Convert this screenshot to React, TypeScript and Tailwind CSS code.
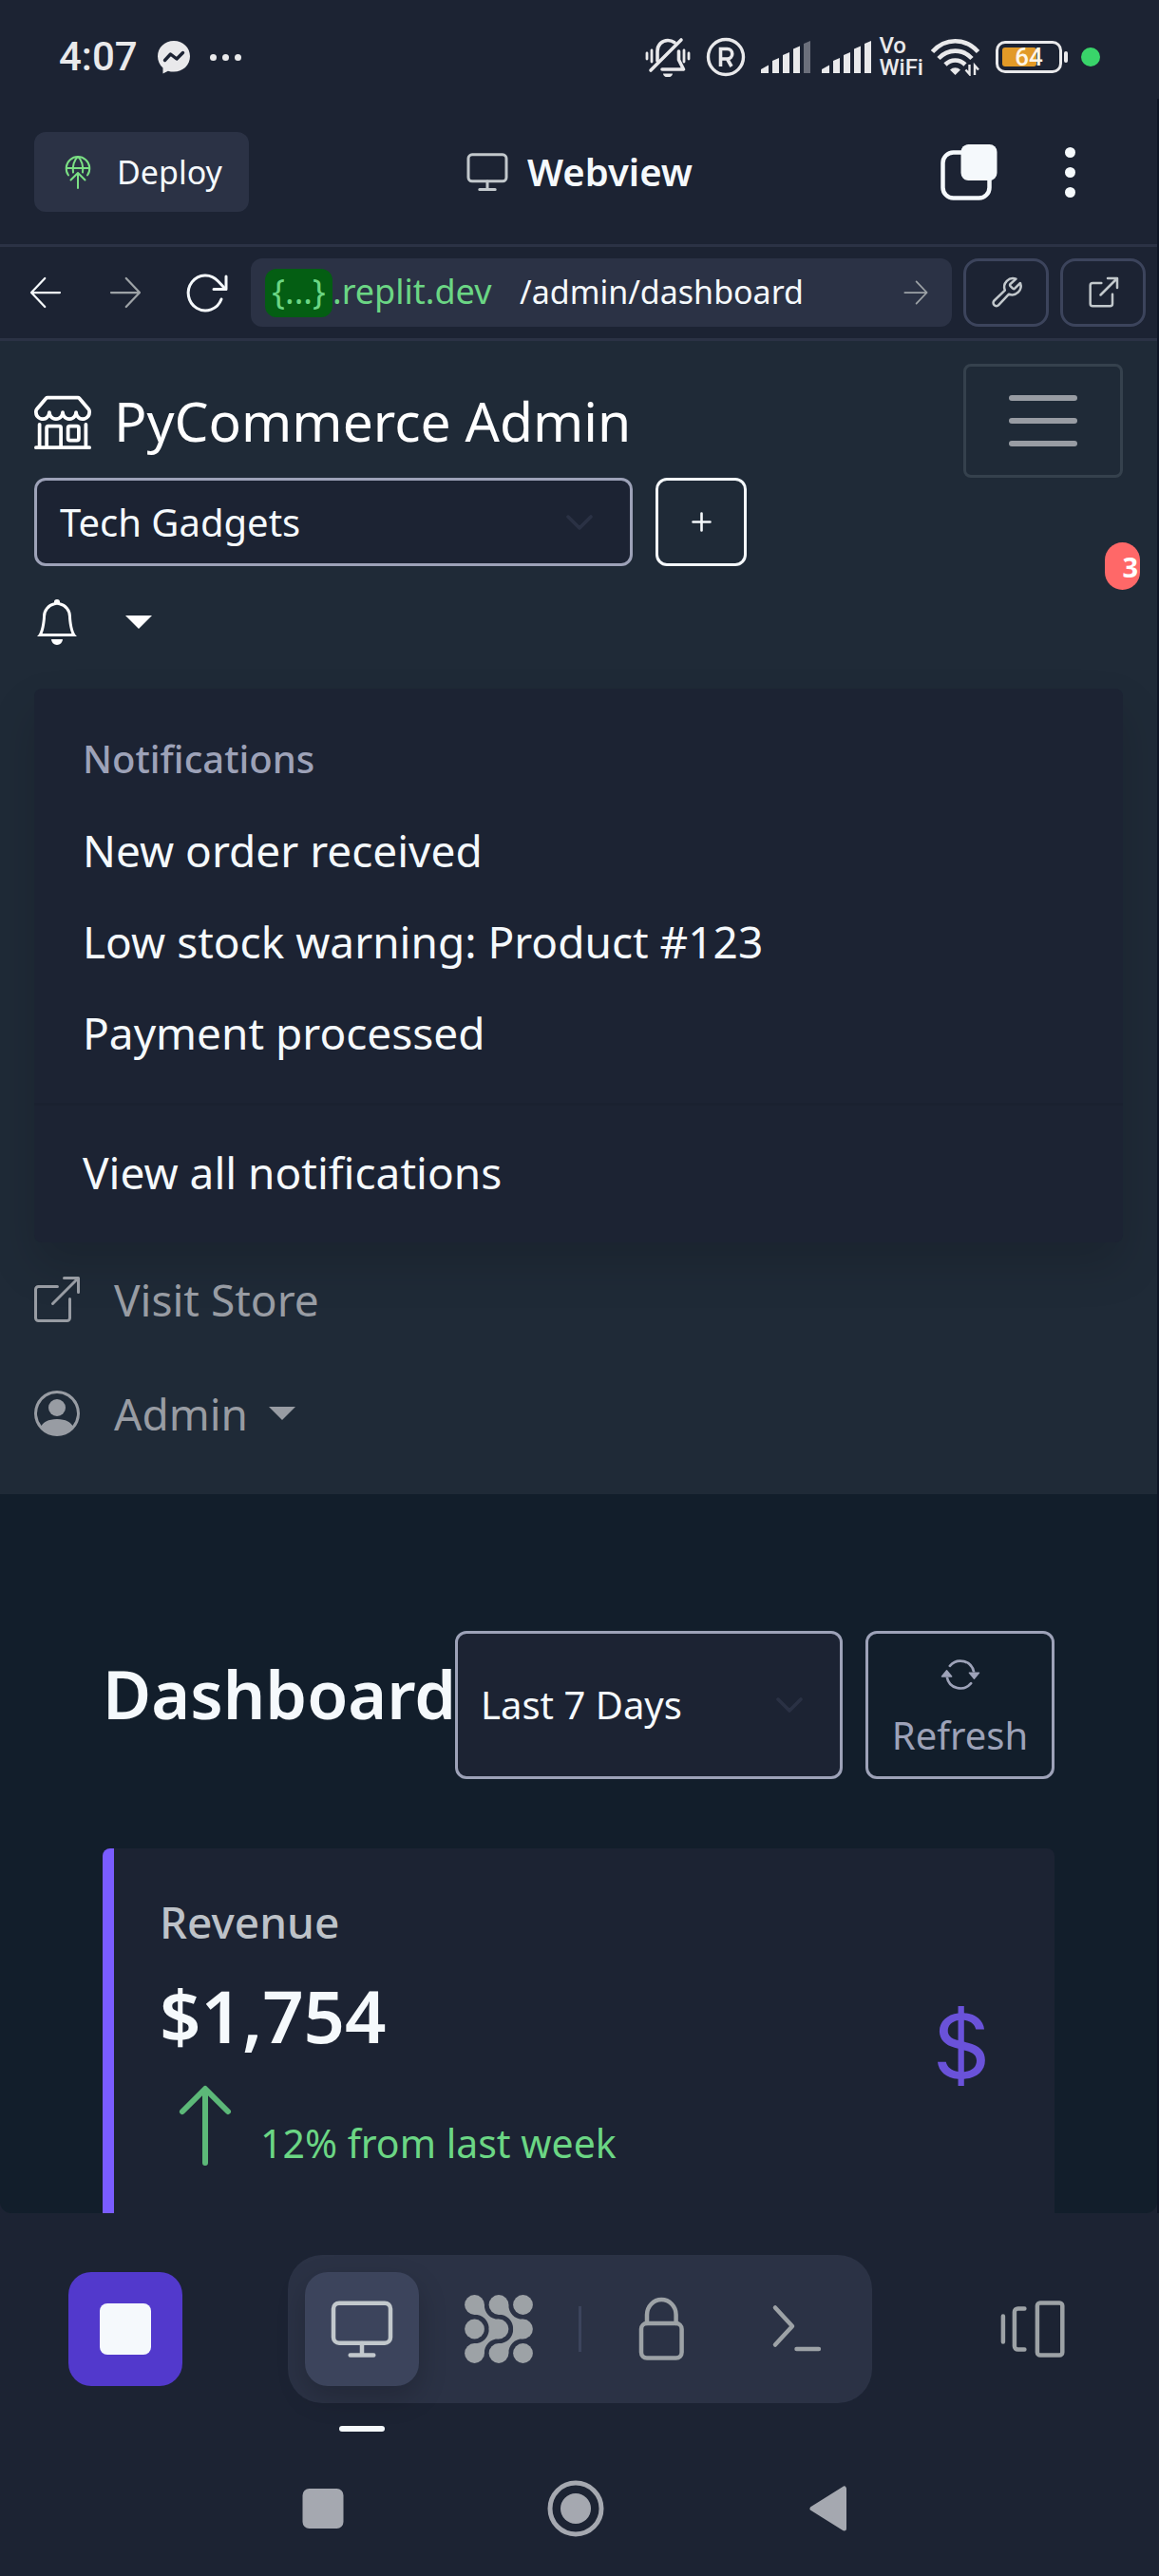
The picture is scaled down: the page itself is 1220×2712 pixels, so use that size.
import type { ReactNode } from "react";
import {
  BsArrowRepeat,
  BsArrowUp,
  BsBell,
  BsBoxArrowUpRight,
  BsChevronDown,
  BsCurrencyDollar,
  BsPersonCircle,
  BsShop,
} from "react-icons/bs";

const notifications = ["New order received", "Low stock warning: Product #123", "Payment processed"];

/* ---------- icons ---------- */

function Stroke({ className, width = 1.5, children }: { className: string; width?: number; children: ReactNode }) {
  return (
    <svg
      viewBox="0 0 24 24"
      className={className}
      fill="none"
      stroke="currentColor"
      strokeWidth={width}
      strokeLinecap="round"
      strokeLinejoin="round"
      aria-hidden="true"
    >
      {children}
    </svg>
  );
}

function MonitorIcon({ className }: { className: string }) {
  return (
    <Stroke className={className}>
      <rect x="2" y="2.9" width="20" height="14" rx="2" />
      <path d="M12 17v4.2M7.9 21.2h8.2" />
    </Stroke>
  );
}

function DeployIcon() {
  return (
    <svg viewBox="0 0 28 36" className="h-9 w-7" fill="none" stroke="currentColor" strokeWidth="2" strokeLinecap="round" strokeLinejoin="round" aria-hidden="true">
      <path d="M4 21.500A12.300 12.300 0 1 1 24 21.500" />
      <path d="M2 14h24" />
      <path d="M9 18.500C8 12 10 5 14 2C18 5 20 12 19 18.500" />
      <path d="M14 35V19M6.500 26.500L14 19l7.500 7.500" />
    </svg>
  );
}

function MessengerIcon() {
  return (
    <svg viewBox="0 0 36 36" className="size-9" aria-hidden="true">
      <path fill="#e9e9eb" d="M18 1C8.500 1 1 8 1 17.300c0 5 2.100 9.200 5.500 12.200v6l5.400-2.800c1.900.6 4 .9 6.100.9 9.500 0 17-7 17-16.300S27.500 1 18 1z" />
      <path fill="none" stroke="#1c2333" strokeWidth="3.400" strokeLinejoin="round" strokeLinecap="round" d="M8.500 21.500l6-6.500 6.500 5 6.500-6.500" />
    </svg>
  );
}

function MutedBellIcon() {
  return (
    <svg viewBox="0 0 48 42" className="h-[42px] w-12" fill="none" stroke="#e9e9eb" strokeWidth="3.600" strokeLinecap="round" strokeLinejoin="round" aria-hidden="true">
      <path d="M13 25V15C13 8 18 3.500 24 3.500c2.500 0 5 .8 7 2.300" />
      <path d="M35.500 15v9l5 10H18" />
      <path d="M6 35L38 3" />
      <path d="M19 38.500h10a5 4 0 0 1-10 0z" fill="#e9e9eb" stroke="none" />
      <path d="M2 17v6M7 14v12M41 14v12M46 17v6" strokeWidth="2.800" />
    </svg>
  );
}

function RegisteredIcon() {
  return (
    <svg viewBox="0 0 42 42" className="size-[42px]" fill="none" stroke="#e9e9eb" strokeWidth="3.400" aria-hidden="true">
      <circle cx="21" cy="21" r="18.500" />
      <path d="M15.500 31V12.500h7a5 5 0 0 1 0 10.500h-7M22.500 23l4.500 8" strokeWidth="3.600" />
    </svg>
  );
}

function SignalIcon({ last }: { last: string }) {
  return (
    <svg viewBox="0 0 52 36" className="h-9 w-[52px]" fill="#e9e9eb" aria-hidden="true">
      <path d="M0 35v-4l8-4.500V35z" />
      <path d="M12 35V22l7-3v16z" />
      <path d="M23 35V16l7-3v22z" />
      <path d="M34 35V9.500l7-3V35z" />
      <path d="M45 35V4l7-3v34z" fill={last} />
    </svg>
  );
}

function WifiIcon() {
  return (
    <svg viewBox="0 0 52 40" className="h-10 w-[52px]" fill="none" stroke="#e9e9eb" strokeWidth="4.600" aria-hidden="true">
      <path d="M1.500 14.500C15-.5 36-.5 49.500 14.500" />
      <path d="M8 21.500c10-10.500 25-10.500 35 0" />
      <path d="M15 28c6-6 15-6 21 0" />
      <path d="M20 33.500a8 8 0 0 1 11 0L25.500 39z" fill="#e9e9eb" stroke="none" />
      <path d="M40.500 28v10l-4-4.500M46 39V29l4 4.500" strokeWidth="2.400" />
    </svg>
  );
}

function BatteryIcon() {
  return (
    <div className="flex items-center gap-0.5" role="img" aria-label="Battery 64%">
      <div className="relative flex h-[34px] w-[70px] items-center rounded-[10px] border-3 border-[#e9e9eb] p-1">
        <div className="h-full w-9 rounded-[3px] bg-[#e29a27]" />
        <span className="absolute inset-0 flex items-center justify-center font-['Roboto'] text-[26px] leading-none font-medium text-[#fdf6e8]">
          64
        </span>
      </div>
      <div className="h-3 w-1 rounded-sm bg-[#e9e9eb]" />
    </div>
  );
}

function ArrowIcon({ className, left = false }: { className: string; left?: boolean }) {
  return <Stroke className={className}>{left ? <path d="M22 12H3M11.500 2L2 12l9.500 10" /> : <path d="M2 12h19M12.500 2L22 12l-9.500 10" />}</Stroke>;
}

function ReloadIcon() {
  return (
    <svg viewBox="0 0 48 48" className="size-12" fill="none" stroke="currentColor" strokeWidth="3" strokeLinecap="round" strokeLinejoin="round" aria-hidden="true">
      <path d="M41 31A18 18.500 0 1 1 37.500 12l8 8.500" />
      <path d="M46 7v13.500H33" />
    </svg>
  );
}

function WrenchIcon() {
  return (
    <Stroke className="size-10">
      <path d="M14.700 6.600a.9.900 0 0 0 0 1.300l1.500 1.500a.9.900 0 0 0 1.300 0l3.500-3.400a5.500 5.500 0 0 1-7.200 7l-6.500 6.900a1.900 1.900 0 0 1-2.800-2.800l6.800-6.500a5.500 5.500 0 0 1 7-7.200z" />
    </Stroke>
  );
}

function OpenIcon() {
  return (
    <Stroke className="size-10">
      <path d="M11 6H5.500A1.500 1.500 0 0 0 4 7.500V19a1.500 1.500 0 0 0 1.500 1.500h11A1.500 1.500 0 0 0 18 19v-6" />
      <path d="M10.500 13.500L21 3M15 3h6v6" />
    </Stroke>
  );
}

function TabsIcon() {
  return (
    <svg viewBox="0 0 60 60" className="size-[60px]" aria-hidden="true">
      <rect x="2.500" y="9.500" width="49" height="48" rx="11" fill="none" stroke="#f5f9fc" strokeWidth="4.500" />
      <rect x="21.500" y="1" width="38" height="38" rx="8" fill="#f5f9fc" />
    </svg>
  );
}

function GridIcon() {
  const centres = [10.5, 36, 61.5];
  const link = "M20.800 10.500C20.800 19 27 25.700 36 25.700V36H25.700C25.700 27 19 20.800 10.500 20.800V10.500z";
  const mirrored = "M20.800 61.500C20.800 53 27 46.300 36 46.300V36H25.700C25.700 45 19 51.200 10.500 51.200V61.500z";
  return (
    <svg viewBox="0 0 72 72" className="size-[72px]" fill="currentColor" aria-hidden="true">
      {centres.map((cx) => centres.map((cy) => <circle key={`${cx}-${cy}`} cx={cx} cy={cy} r="10.400" />))}
      <path d={link} />
      <path d={mirrored} />
      <g transform="translate(25.500 0)">
        <path d={link} />
        <path d={mirrored} />
      </g>
    </svg>
  );
}

function LockIcon() {
  return (
    <Stroke className="size-[72px]">
      <rect x="5" y="10" width="14.200" height="12.200" rx="2" />
      <path d="M7 10V7a5 5.200 0 0 1 10.200 0v3" />
    </Stroke>
  );
}

function TerminalIcon() {
  return (
    <Stroke className="size-[72px]">
      <path d="M4 4.500l6 6.500-6 6.500M11.500 19h7.800" />
    </Stroke>
  );
}

function SwitcherIcon() {
  return (
    <Stroke className="size-[72px]">
      <path d="M1.300 7.500v9M8.800 4.800H6.500a1.200 1.200 0 0 0-1.200 1.200v12a1.200 1.200 0 0 0 1.200 1.200h2.300" />
      <rect x="13.300" y="2.800" width="8.800" height="18.400" rx="1" />
    </Stroke>
  );
}

function Caret() {
  return (
    <svg viewBox="0 0 28 14" className="h-3.5 w-7" fill="currentColor" aria-hidden="true">
      <path d="M0 0h28L14 14z" />
    </svg>
  );
}

/* ---------- sections ---------- */

function StatusBar() {
  return (
    <div className="flex h-[104px] items-center justify-between pt-4 pr-[62px] pl-[62px]">
      <div className="flex items-center gap-5">
        <span className="font-['Roboto'] text-[42px] leading-none font-medium text-[#e9e9eb]">4:07</span>
        <MessengerIcon />
        <div className="flex gap-1.5">
          <i className="size-[7px] rounded-full bg-[#e9e9eb]" />
          <i className="size-[7px] rounded-full bg-[#e9e9eb]" />
          <i className="size-[7px] rounded-full bg-[#e9e9eb]" />
        </div>
      </div>
      <div className="flex items-center gap-3">
        <MutedBellIcon />
        <div className="px-1">
          <RegisteredIcon />
        </div>
        <SignalIcon last="#6b6f7b" />
        <SignalIcon last="#e9e9eb" />
        <span className="-ml-1 font-['Roboto'] text-[24px] leading-[23px] font-medium text-[#e9e9eb]">
          Vo
          <br />
          WiFi
        </span>
        <div className="-ml-1">
          <WifiIcon />
        </div>
        <div className="ml-1">
          <BatteryIcon />
        </div>
        <i className="ml-0.5 size-5 rounded-full bg-[#39d46a]" />
      </div>
    </div>
  );
}

function TopBar() {
  return (
    <header className="grid grid-cols-[1fr_auto_1fr] items-center border-b-3 border-[#2b3245] px-9 pt-[35px] pb-[34px]">
      <button type="button" className="flex h-[84px] items-center gap-[27px] justify-self-start rounded-xl bg-[#2b3245] pr-7 pl-8 text-[34px]">
        <span className="text-[#7be084]">
          <DeployIcon />
        </span>
        Deploy
      </button>
      <h1 className="flex items-center gap-[18px] text-[40px] leading-none font-semibold">
        <MonitorIcon className="size-12 text-[#c2c8cc]" />
        Webview
      </h1>
      <div className="mr-[26px] flex items-center gap-[46px] justify-self-end">
        <button type="button" aria-label="Tabs">
          <TabsIcon />
        </button>
        <button type="button" aria-label="More" className="flex w-[60px] flex-col items-center gap-2.5">
          <i className="size-[11px] rounded-full bg-[#f5f9fc]" />
          <i className="size-[11px] rounded-full bg-[#f5f9fc]" />
          <i className="size-[11px] rounded-full bg-[#f5f9fc]" />
        </button>
      </div>
    </header>
  );
}

function AddressBar() {
  return (
    <nav className="flex items-center gap-3 border-b-3 border-[#2b3245] p-3" aria-label="Address">
      <div className="flex flex-1 items-center">
        <button type="button" aria-label="Back" className="flex w-[84px] pl-[18px]">
          <ArrowIcon className="size-9" left />
        </button>
        <button type="button" aria-label="Forward" className="flex w-[84px] pl-[18px] text-[#9da2a6]">
          <ArrowIcon className="size-9" />
        </button>
        <button type="button" aria-label="Reload" className="flex w-[84px] pl-3">
          <ReloadIcon />
        </button>
        <div className="flex h-[72px] flex-1 items-center rounded-xl bg-[#2b3245] px-[15px]">
          <div className="flex h-[60px] w-[242px] shrink-0 items-center overflow-hidden text-[36px] whitespace-nowrap text-[#6bd684]">
            <span className="flex h-[51px] w-[71px] shrink-0 items-center justify-center rounded-xl bg-[#045e13] pb-0.5">
              {"{...}"}
            </span>
            <span className="pb-0.5">.replit.dev</span>
          </div>
          <input
            aria-label="Path"
            defaultValue="/admin/dashboard"
            className="ml-[26px] h-[60px] w-0 min-w-0 flex-1 bg-transparent pb-0.5 text-[34px] text-[#f5f9fc] outline-none"
          />
          <button type="button" aria-label="Go" className="px-[9px] text-[#9da2a6]">
            <ArrowIcon className="size-7" />
          </button>
        </div>
      </div>
      <button type="button" aria-label="Developer tools" className="flex h-[72px] w-[90px] items-center justify-center rounded-2xl border-3 border-[#3c445c] text-[#c2c8cc]">
        <WrenchIcon />
      </button>
      <button type="button" aria-label="Open in new tab" className="flex h-[72px] w-[90px] items-center justify-center rounded-2xl border-3 border-[#3c445c] text-[#c2c8cc]">
        <OpenIcon />
      </button>
    </nav>
  );
}

function Select({ label, value, className }: { label: string; value: string; className: string }) {
  return (
    <div className={`relative ${className}`}>
      <select
        aria-label={label}
        className="size-full appearance-none rounded-xl border-3 border-[#9da2b8] bg-[#1c2333] pl-6 text-[40px] text-[#f5f9fc] outline-none"
      >
        <option>{value}</option>
      </select>
      <BsChevronDown strokeWidth={0.8} className="pointer-events-none absolute inset-y-0 right-10 my-auto size-8 text-[#2b3245]" />
    </div>
  );
}

function AdminNav() {
  return (
    <div className="relative bg-[#1f2a37] px-9 pt-6 pb-[25px]">
      <div className="flex items-center justify-between">
        <a href="#home" className="flex items-center gap-6 text-[57px] leading-none text-white">
          <BsShop className="size-[60px]" />
          PyCommerce Admin
        </a>
        <button
          type="button"
          aria-label="Toggle navigation"
          className="flex h-[120px] w-[168px] flex-col items-center justify-center gap-[18px] rounded-lg border-3 border-[#35414d]"
        >
          <i className="h-1.5 w-[72px] rounded-full bg-[#989ca3]" />
          <i className="h-1.5 w-[72px] rounded-full bg-[#989ca3]" />
          <i className="h-1.5 w-[72px] rounded-full bg-[#989ca3]" />
        </button>
      </div>
      <div className="flex gap-6">
        <Select label="Store" value="Tech Gadgets" className="h-[93px] w-[630px]" />
        <button type="button" aria-label="Add store" className="flex w-24 items-center justify-center rounded-xl border-3 border-[#f5f9fc]">
          <svg viewBox="0 0 21 21" className="size-[21px]" stroke="currentColor" strokeWidth="2.600" strokeLinecap="round" aria-hidden="true">
            <path d="M10.500 1.500v18M1.500 10.500h18" />
          </svg>
        </button>
      </div>
      <span className="absolute top-[212px] right-[18px] flex h-[50px] w-[37px] items-center justify-end rounded-full bg-[#ff6868] pr-0.5 text-[29px] leading-none font-bold text-white">
        3
      </span>
      <button type="button" aria-label="Notifications" aria-expanded="true" className="mt-6 flex h-[70px] items-center gap-12 text-white">
        <BsBell className="size-12" />
        <Caret />
      </button>
      <section className="mt-[35px] rounded-lg bg-[#1c2333] py-6 text-[46px] leading-none shadow-[0_24px_48px_rgba(0,0,0,0.15)]">
        <h2 className="flex h-[100px] items-center px-[51px] text-[40px] font-medium text-[#9da2b8]">Notifications</h2>
        {notifications.map((text) => (
          <a key={text} href="#notification" className="flex h-24 items-center px-[51px] pb-1">
            {text}
          </a>
        ))}
        <hr className="my-6 border-t-3 border-[#1a2130]" />
        <a href="#notifications" className="flex h-24 items-center px-[51px] pb-1">
          View all notifications
        </a>
      </section>
      <a href="#store" className="flex h-[120px] items-center gap-9 text-[46px] leading-none text-[#989ca3]">
        <BsBoxArrowUpRight className="size-12" />
        Visit Store
      </a>
      <button type="button" className="flex h-[120px] items-center gap-9 text-[46px] leading-none text-[#989ca3]">
        <BsPersonCircle className="size-12" />
        <span className="flex items-center gap-[22px]">
          Admin
          <Caret />
        </span>
      </button>
    </div>
  );
}

function Dashboard() {
  return (
    <main className="bg-[#121e2b] px-[108px] pt-36">
      <div className="flex items-stretch">
        <h2 className="w-[371px] shrink-0 pt-3.5 text-[70px] font-semibold">Dashboard</h2>
        <Select label="Period" value="Last 7 Days" className="min-w-0 flex-1" />
        <button
          type="button"
          className="ml-6 flex w-[199px] shrink-0 flex-col items-center rounded-xl border-3 border-[#9da2b8] py-[11px] text-[40px] leading-[64px] text-[#9da2b8]"
        >
          <span className="flex h-16 items-center">
            <BsArrowRepeat className="size-[42px]" />
          </span>
          Refresh
        </button>
      </div>
      <section className="mt-[73px] flex items-center justify-between rounded-t-lg border-l-12 border-[#7a5cff] bg-[#1c2333] pt-[47px] pr-[51px] pb-4 pl-12">
        <div className="pb-7">
          <h3 className="text-[46px] leading-[60px] font-medium text-[#bdc2c8]">Revenue</h3>
          <p className="mt-6 text-[76px] leading-[90px] font-semibold">$1,754</p>
          <p className="mt-[23px] flex items-end gap-2.5 text-[41px] leading-[60px] text-[#6bd684]">
            <BsArrowUp className="size-24 text-[#5cb878]" />
            12% from last week
          </p>
        </div>
        <BsCurrencyDollar className="size-24 text-[#6a52d9]" />
      </section>
    </main>
  );
}

function Dock() {
  return (
    <footer className="grid grid-cols-[1fr_auto_1fr] items-center px-[72px] pt-11">
      <button type="button" aria-label="Stop" className="flex size-[120px] items-center justify-center rounded-3xl bg-[#5239cc]">
        <i className="size-[54px] rounded-lg bg-[#f5f9fc]" />
      </button>
      <div className="flex items-center rounded-[36px] bg-[#2b3245] p-[18px] text-[#9da2a6]">
        <button type="button" aria-label="Webview" className="relative flex size-[120px] items-center justify-center rounded-3xl bg-[#3c445c] text-[#c2c8cc] shadow-[0_12px_30px_rgba(0,0,0,0.2)]">
          <MonitorIcon className="size-[72px]" />
          <i className="absolute top-[162px] left-9 h-1.5 w-12 rounded-full bg-[#f5f9fc]" />
        </button>
        <button type="button" aria-label="Apps" className="ml-6 flex size-[120px] items-center justify-center">
          <GridIcon />
        </button>
        <i className="mx-6 h-12 w-[3px] bg-[#3c445c]" />
        <button type="button" aria-label="Secrets" className="flex size-[120px] items-center justify-center">
          <LockIcon />
        </button>
        <button type="button" aria-label="Shell" className="ml-6 flex size-[120px] items-center justify-center">
          <TerminalIcon />
        </button>
      </div>
      <button type="button" aria-label="Switch panes" className="mr-6 justify-self-end text-[#9da2a6]">
        <SwitcherIcon />
      </button>
    </footer>
  );
}

function SystemNav() {
  return (
    <div className="flex justify-center gap-[206px] pt-[81px] pr-2 pb-10">
      <button type="button" aria-label="Recents" className="flex w-[60px] items-center justify-center">
        <svg viewBox="0 0 44 44" className="size-11" aria-hidden="true">
          <rect x="0.500" y="1" width="43" height="42" rx="7" fill="#a5a8b0" />
        </svg>
      </button>
      <button type="button" aria-label="Home" className="flex w-[60px] items-center justify-center">
        <svg viewBox="0 0 60 60" className="size-[60px]" aria-hidden="true">
          <circle cx="30" cy="30" r="27" fill="none" stroke="#a5a8b0" strokeWidth="5" />
          <circle cx="30" cy="30" r="16" fill="#a5a8b0" />
        </svg>
      </button>
      <button type="button" aria-label="System back" className="flex w-[60px] items-center justify-center">
        <svg viewBox="0 0 42 50" className="h-[50px] w-[42px]" aria-hidden="true">
          <path d="M4 25L37.500 4v42z" fill="#a5a8b0" stroke="#a5a8b0" strokeWidth="5" strokeLinejoin="round" />
        </svg>
      </button>
    </div>
  );
}

export default function App() {
  return (
    <div className="min-h-screen bg-[#1c2333] font-['Noto_Sans',sans-serif] text-[#f5f9fc]">
      <StatusBar />
      <div className="border-r-2 border-[#0e1525]">
        <TopBar />
        <AddressBar />
        <div className="overflow-hidden rounded-b-xl">
          <AdminNav />
          <Dashboard />
        </div>
      </div>
      <Dock />
      <SystemNav />
    </div>
  );
}
